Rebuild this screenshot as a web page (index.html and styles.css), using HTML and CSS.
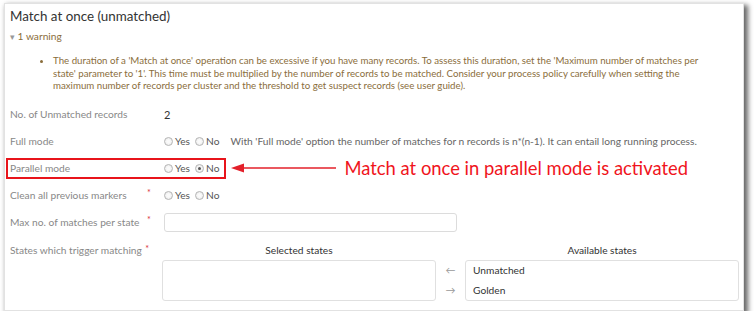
FILE: index.html
```html
<!DOCTYPE html>
<html lang="en">
<head>
    <meta charset="UTF-8">
    <title>Match at once (unmatched)</title>
    <link rel="stylesheet" href="styles.css">
</head>
<body>
    <div class="panel">
        <div class="title">Match at once (unmatched)</div>

        <div class="warn-toggle"><span class="caret">&#9662;</span> 1 warning</div>
        <ul class="warn-list">
            <li>The duration of a 'Match at once' operation can be excessive if you have many records. To assess this duration, set the 'Maximum number of matches per state' parameter to '1'. This time must be multiplied by the number of records to be matched. Consider your process policy carefully when setting the maximum number of records per cluster and the threshold to get suspect records (see user guide).</li>
        </ul>

        <div class="form">
            <div class="row">
                <span class="lbl">No. of Unmatched records</span>
                <span class="req"></span>
                <span class="val">2</span>
            </div>

            <div class="row">
                <span class="lbl">Full mode</span>
                <span class="req"></span>
                <span class="radios">
                    <span class="radio"></span><span class="opt">Yes</span>
                    <span class="radio"></span><span class="opt">No</span>
                </span>
                <span class="help">With 'Full mode' option the number of matches for n records is n*(n-1). It can entail long running process.</span>
            </div>

            <div class="row">
                <div class="highlight">
                    <span class="lbl">Parallel mode</span>
                    <span class="req"></span>
                    <span class="radios">
                        <span class="radio"></span><span class="opt">Yes</span>
                        <span class="radio checked"></span><span class="opt">No</span>
                    </span>
                </div>
                <svg class="pointer" width="105" height="12" viewBox="0 0 105 12">
                    <line x1="10" y1="6" x2="105" y2="6" stroke="#e3202a" stroke-width="1.6"/>
                    <polygon points="0,6 13,1.5 13,10.5" fill="#e3202a"/>
                </svg>
                <span class="note">Match at once in parallel mode is activated</span>
            </div>

            <div class="row">
                <span class="lbl">Clean all previous markers</span>
                <span class="req">*</span>
                <span class="radios">
                    <span class="radio"></span><span class="opt">Yes</span>
                    <span class="radio"></span><span class="opt">No</span>
                </span>
            </div>

            <div class="row">
                <span class="lbl">Max no. of matches per state</span>
                <span class="req">*</span>
                <input class="field" type="text">
            </div>

            <div class="row states">
                <span class="lbl">States which trigger matching</span>
                <span class="req">*</span>
                <div class="dual">
                    <div class="dual-head">Selected states</div>
                    <div></div>
                    <div class="dual-head">Available states</div>
                    <div class="box"></div>
                    <div class="moves">
                        <span>&larr;</span>
                        <span>&rarr;</span>
                    </div>
                    <div class="box">
                        <div class="item">Unmatched</div>
                        <div class="item">Golden</div>
                    </div>
                </div>
            </div>
        </div>
    </div>
</body>
</html>
```

FILE: styles.css
```css
body {
    margin: 0;
    background: #fff;
    font-family: Lato, "Open Sans", sans-serif;
    font-size: 10.2px;
    color: #333;
}
.panel {
    margin: 3px 0 0 4px;
    width: 740px;
    height: 308px;
    box-sizing: border-box;
    padding: 2px 4px 0 5px;
    background: #fff;
    border: 1px solid #e2e2e2;
    box-shadow: 3px 3px 5px 1px rgba(0, 0, 0, 0.6);
}
.title {
    font-size: 13.4px;
    line-height: 20px;
    color: #333;
}
.warn-toggle {
    margin-top: 2px;
    line-height: 16px;
    color: #8a6d3b;
}
.caret {
    color: #999;
    font-size: 9px;
}
.warn-list {
    margin: 9px 24px 0 0;
    padding-left: 43px;
    font-size: 9.7px;
    line-height: 12.5px;
    color: #8a6d3b;
}
.form {
    margin-top: 9px;
}
.row {
    display: flex;
    align-items: center;
    height: 27px;
    color: #888;
}
.highlight {
    display: flex;
    align-items: center;
    margin-left: -4px;
    padding: 0 0 0 2px;
    height: 17px;
    border: 2px solid #e8141b;
}
.lbl {
    width: 137px;
    white-space: nowrap;
}
.req {
    width: 17px;
    color: #d9323a;
    font-size: 9px;
    align-self: flex-start;
    padding-top: 5px;
}
.highlight .req,
.highlight .lbl {
    padding-top: 0;
}
.val {
    color: #333;
    font-size: 11px;
}
.radios {
    display: flex;
    align-items: center;
    color: #555;
}
.radio {
    width: 7px;
    height: 7px;
    border: 1px solid #b5b5b5;
    border-radius: 50%;
    background: radial-gradient(circle, #fafafa 30%, #e4e4e4 100%);
    margin-right: 2px;
    position: relative;
}
.radio.checked::after {
    content: "";
    position: absolute;
    left: 2px;
    top: 2px;
    width: 3px;
    height: 3px;
    border-radius: 50%;
    background: #555;
}
.opt {
    margin-right: 5px;
}
.help {
    margin-left: 6px;
    color: #666;
}
.pointer {
    margin-left: 5px;
    display: block;
}
.note {
    margin-left: 8px;
    font-size: 18.4px;
    color: #f0141c;
}
.field {
    width: 293px;
    height: 19px;
    box-sizing: border-box;
    border: 1px solid #dcdcdc;
    border-radius: 3px;
    margin: 0;
}
.states {
    height: auto;
    align-items: flex-start;
    padding-top: 6px;
}
.states .lbl {
    line-height: 16px;
}
.states .req {
    padding-top: 1px;
}
.dual {
    display: grid;
    grid-template-columns: 274px 29px 274px;
    grid-template-rows: 16px 41px;
    row-gap: 2px;
    color: #333;
}
.dual-head {
    text-align: center;
    line-height: 16px;
}
.box {
    border: 1px solid #e0e0e0;
    border-radius: 3px;
    padding: 0 7px;
}
.item {
    line-height: 20px;
    margin-top: -1px;
}
.item + .item {
    margin-top: 0;
}
.moves {
    display: flex;
    flex-direction: column;
    align-items: center;
    color: #999;
    font-size: 10px;
    line-height: 20px;
}
```
